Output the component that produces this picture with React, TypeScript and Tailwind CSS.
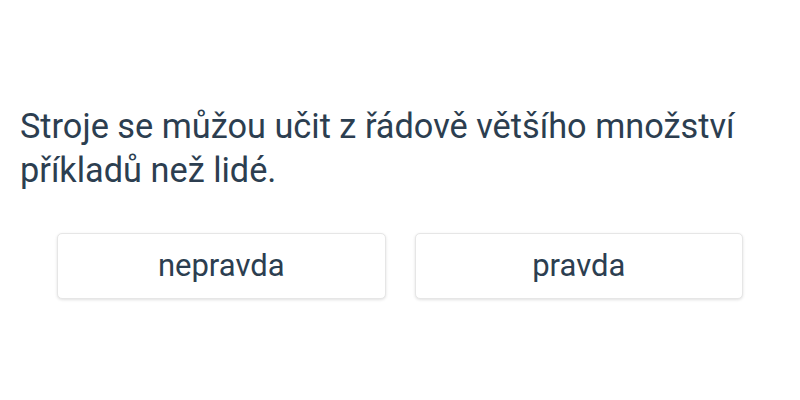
export default function App() {
  return (
    <div className="w-[800px] h-[400px] bg-white" style={{ fontFamily: 'Roboto, "Noto Sans", sans-serif' }}>
      <div className="pt-[104px] px-5">
        <p className="text-[34.3px] leading-[44px] text-[#2c3e50]">
          Stroje se můžou učit z řádově většího množství příkladů než lidé.
        </p>
      </div>
      <div className="mt-[41px] px-[57px] grid grid-cols-2 gap-[29px]">
        <button className="h-[66px] rounded-[5px] bg-white border border-[#e6e6e6] shadow-[0_1px_3px_rgba(0,0,0,0.12)] text-[31px] text-[#2c3e50]">
          nepravda
        </button>
        <button className="h-[66px] rounded-[5px] bg-white border border-[#e6e6e6] shadow-[0_1px_3px_rgba(0,0,0,0.12)] text-[31px] text-[#2c3e50]">
          pravda
        </button>
      </div>
    </div>
  );
}
